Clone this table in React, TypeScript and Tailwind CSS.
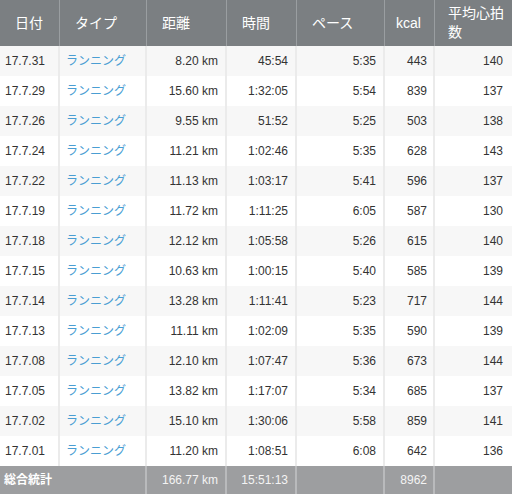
import React from "react";

type Run = {
  date: string;
  dist: string;
  time: string;
  pace: string;
  kcal: number;
  hr: number;
};

const runs: Run[] = [
  { date: "17.7.31", dist: "8.20", time: "45:54", pace: "5:35", kcal: 443, hr: 140 },
  { date: "17.7.29", dist: "15.60", time: "1:32:05", pace: "5:54", kcal: 839, hr: 137 },
  { date: "17.7.26", dist: "9.55", time: "51:52", pace: "5:25", kcal: 503, hr: 138 },
  { date: "17.7.24", dist: "11.21", time: "1:02:46", pace: "5:35", kcal: 628, hr: 143 },
  { date: "17.7.22", dist: "11.13", time: "1:03:17", pace: "5:41", kcal: 596, hr: 137 },
  { date: "17.7.19", dist: "11.72", time: "1:11:25", pace: "6:05", kcal: 587, hr: 130 },
  { date: "17.7.18", dist: "12.12", time: "1:05:58", pace: "5:26", kcal: 615, hr: 140 },
  { date: "17.7.15", dist: "10.63", time: "1:00:15", pace: "5:40", kcal: 585, hr: 139 },
  { date: "17.7.14", dist: "13.28", time: "1:11:41", pace: "5:23", kcal: 717, hr: 144 },
  { date: "17.7.13", dist: "11.11", time: "1:02:09", pace: "5:35", kcal: 590, hr: 139 },
  { date: "17.7.08", dist: "12.10", time: "1:07:47", pace: "5:36", kcal: 673, hr: 144 },
  { date: "17.7.05", dist: "13.82", time: "1:17:07", pace: "5:34", kcal: 685, hr: 137 },
  { date: "17.7.02", dist: "15.10", time: "1:30:06", pace: "5:58", kcal: 859, hr: 141 },
  { date: "17.7.01", dist: "11.20", time: "1:08:51", pace: "6:08", kcal: 642, hr: 136 },
];

const cols = "grid grid-cols-[60px_87px_80px_70px_88px_50px_77px]";
const font = { fontFamily: '"Liberation Sans", "Noto Sans CJK JP", sans-serif' };

export default function App() {
  const head = ["日付", "タイプ", "距離", "時間", "ペース", "kcal", "平均心拍数"];
  return (
    <div className="w-[512px] h-[494px] overflow-hidden bg-white text-[#333]" style={font}>
      <div className={`${cols} h-[46px] bg-[#7b7f82] text-white text-[14px]`}>
        {head.map((h, i) => (
          <div
            key={h}
            className={`flex items-center border-r border-[#9a9ea1] last:border-r-0 ${
              i === 5 ? "pl-[11px]" : i === 6 ? "pl-[13px] pr-[8px] leading-[19px]" : "pl-[15px]"
            }`}
          >
            {h}
          </div>
        ))}
      </div>

      {runs.map((r, i) => (
        <div
          key={r.date}
          className={`${cols} h-[30px] text-[12px] ${i % 2 === 0 ? "bg-[#f7f7f7]" : "bg-white"}`}
        >
          <div className="flex items-center pl-[5px] border-r-2 border-[#ebebeb]">{r.date}</div>
          <div className="flex items-center pl-[6px] text-[#4a9ed3] border-r-2 border-[#ebebeb]">
            ランニング
          </div>
          <div className="flex items-center justify-end pr-[7px] border-r-2 border-[#ebebeb]">
            {r.dist} km
          </div>
          <div className="flex items-center justify-end pr-[7px] border-r-2 border-[#ebebeb]">
            {r.time}
          </div>
          <div className="flex items-center justify-end pr-[7px] border-r-2 border-[#ebebeb]">
            {r.pace}
          </div>
          <div className="flex items-center justify-end pr-[6px] border-r-2 border-[#ebebeb]">
            {r.kcal}
          </div>
          <div className="flex items-center justify-end pr-[9px]">{r.hr}</div>
        </div>
      ))}

      <div className={`${cols} h-[28px] bg-[#9d9ea0] text-[#f4f4f4] text-[12px]`}>
        <div className="col-span-2 flex items-center pl-[4px] font-bold text-white border-r-2 border-[#b9babc]">
          総合統計
        </div>
        <div className="flex items-center justify-end pr-[7px] border-r-2 border-[#b9babc]">166.77 km</div>
        <div className="flex items-center justify-end pr-[7px] border-r-2 border-[#b9babc]">15:51:13</div>
        <div className="border-r-2 border-[#b9babc]" />
        <div className="flex items-center justify-end pr-[6px] border-r-2 border-[#b9babc]">8962</div>
        <div />
      </div>
    </div>
  );
}
